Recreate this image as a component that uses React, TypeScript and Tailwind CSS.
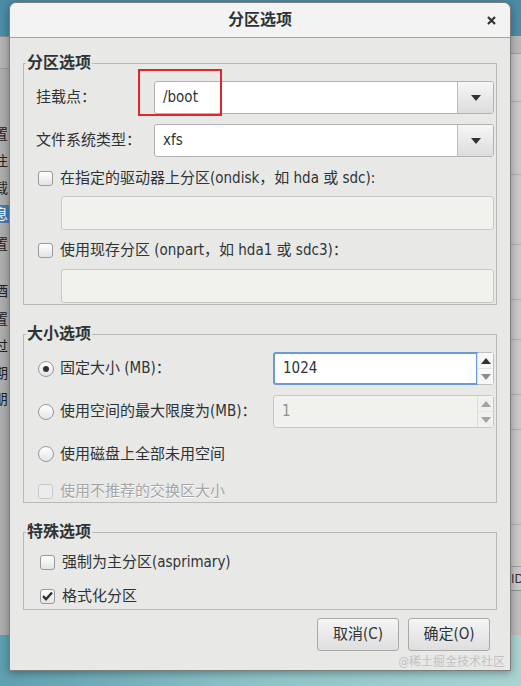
import React from "react";

const leftChars = [
  { y: 133, c: "置" },
  { y: 160, c: "注" },
  { y: 187, c: "载" },
  { y: 213, c: "息", hl: true },
  { y: 243, c: "置" },
  { y: 290, c: "酒" },
  { y: 318, c: "置" },
  { y: 345, c: "过" },
  { y: 372, c: "期" },
  { y: 398, c: "朋" },
];

function Desktop() {
  return (
    <div className="absolute inset-0 flex flex-col">
      <div className="h-[36px] bg-[#4c8ba6]" />
      <div className="flex flex-1">
        <div className="relative w-[12px] overflow-hidden bg-[#aeaeae] border-t border-[#8e8e8e]">
          <div className="h-[32px] border-b border-[#9a9a9a] bg-[#b4b4b4]" />
          {leftChars.map((r) => (
            <div
              key={r.y}
              className={`absolute left-0 w-[12px] h-[18px] overflow-hidden leading-[18px] text-[14px] ${r.hl ? "bg-[#4a7db5] text-white" : "text-[#222]"}`}
              style={{ top: r.y - 36 - 9 }}
            >
              <span className="block w-[20px] -ml-[6px]">{r.c}</span>
            </div>
          ))}
        </div>
        <div className="flex-1" />
        <div className="w-[12px] bg-[#c9c9c9] flex flex-col">
          <div className="h-[18px] border-b border-[#a0a0a0] bg-[#b8b8b8]" />
          <div className="h-[48px] border-b border-[#b0b0b0]" />
          <div className="h-[73px] border-b border-[#b0b0b0]" />
          <div className="h-[70px] border-b border-[#b0b0b0]" />
          <div className="h-[55px] border-b border-[#b0b0b0]" />
          <div className="h-[40px] border-b border-[#b0b0b0]" />
          <div className="h-[55px] border-b border-[#b0b0b0]" />
          <div className="h-[35px] border-b border-[#b0b0b0]" />
          <div className="h-[95px] border-b border-[#b0b0b0]" />
          <div className="h-[42px] border-b border-[#a0a0a0]" />
          <div className="h-[24px] overflow-hidden border-b border-[#909090] text-[13px] leading-[24px] text-[#333] pl-[2px]">ID</div>
          <div className="flex-1 bg-[#bdbdbd]" />
        </div>
      </div>
      <div className="h-[51px] bg-gradient-to-r from-[#5e9fb0] via-[#8fc3c8] to-[#a9d4d2]" />
    </div>
  );
}

function Arrow({ color = "#2e3436", up = false }: { color?: string; up?: boolean }) {
  return (
    <svg width="10" height="6" viewBox="0 0 10 6">
      <path d={up ? "M0 6 L5 0 L10 6 Z" : "M0 0 L10 0 L5 6 Z"} fill={color} />
    </svg>
  );
}

function Combo({ value }: { value: string }) {
  return (
    <div className="flex flex-1 h-[33px] rounded-[3px] border border-[#b2b2b2] bg-white overflow-hidden">
      <div className="flex flex-1 items-center pl-[8px] text-[#2e3436]">{value}</div>
      <div className="flex w-[36px] items-center justify-center border-l border-[#bdbdbd] bg-gradient-to-b from-[#f6f6f6] to-[#dcdcdc]">
        <Arrow />
      </div>
    </div>
  );
}

function Checkbox({ checked = false, disabled = false }: { checked?: boolean; disabled?: boolean }) {
  return (
    <div
      className={`flex h-[15px] w-[15px] shrink-0 items-center justify-center rounded-[3px] border ${
        disabled ? "border-[#c9c9c9] bg-[#ececec]" : "border-[#999] bg-gradient-to-b from-white to-[#e4e4e4]"
      }`}
    >
      {checked && (
        <svg width="11" height="10" viewBox="0 0 11 10">
          <path d="M1 5.2 L4 8.2 L10 1.5" fill="none" stroke="#2e3436" strokeWidth="2.4" />
        </svg>
      )}
    </div>
  );
}

function Radio({ checked = false }: { checked?: boolean }) {
  return (
    <div className="flex h-[16px] w-[16px] shrink-0 items-center justify-center rounded-full border border-[#999] bg-gradient-to-b from-white to-[#e4e4e4]">
      {checked && <div className="h-[6px] w-[6px] rounded-full bg-[#2e3436]" />}
    </div>
  );
}

function Field() {
  return <div className="ml-[25px] h-[34px] rounded-[3px] border border-[#c8c8c5] bg-[#f1f1ee]" />;
}

function Spin({ value, focused = false }: { value: string; focused?: boolean }) {
  return (
    <div className={`flex w-[221px] h-[33px] rounded-[3px] border ${focused ? "border-[#c0c0c0] bg-white" : "border-[#c8c8c5] bg-[#f1f1ee]"}`}>
      <div
        className={`flex flex-1 items-center pl-[8px] ${
          focused ? "-m-[1px] rounded-l-[3px] border-2 border-[#6a9bd6] text-[#2e3436]" : "text-[#8e9192]"
        }`}
      >
        {value}
      </div>
      <div className={`flex w-[16px] flex-col border-l ${focused ? "border-[#e0e0e0] bg-[#f7f7f7]" : "border-[#dcdcd8] bg-[#f1f1ee]"}`}>
        <div className="flex flex-1 items-center justify-center border-b border-[#e4e4e4]">
          <Arrow up color={focused ? "#2e3436" : "#a3a3a3"} />
        </div>
        <div className="flex flex-1 items-center justify-center">
          <Arrow color={focused ? "#8c8c8c" : "#a3a3a3"} />
        </div>
      </div>
    </div>
  );
}

function Section({ title, className, children }: { title: string; className: string; children: React.ReactNode }) {
  return (
    <fieldset className="mt-[18px] first:mt-[14px] border border-[#b8b8b8]">
      <legend className="ml-[2px] px-[1px] text-[16px] leading-[22px] font-bold text-[#2e3436]">{title}</legend>
      <div className={className}>{children}</div>
    </fieldset>
  );
}

function Dialog() {
  return (
    <div className="absolute left-[9px] top-[2px] w-[502px] h-[669px] flex flex-col rounded-t-[7px] border border-[#7d7d7d] bg-[#e8e8e7] shadow-[0_2px_8px_rgba(0,0,0,0.35)]">
      <div className="relative flex h-[35px] shrink-0 items-center justify-center rounded-t-[7px] border-b border-[#a3a3a3] bg-[#f3f3f3]">
        <span className="text-[16px] font-bold text-[#2e3436]">分区选项</span>
        <svg className="absolute right-[14px] top-[13px]" width="9" height="9" viewBox="0 0 9 9">
          <path d="M1 1 L8 8 M8 1 L1 8" stroke="#2e3436" strokeWidth="2.2" />
        </svg>
      </div>

      <div className="relative flex flex-1 flex-col px-[13px]">
        <Section title="分区选项" className="pl-[12px] pr-[2px] pb-[1px]">
          <div className="mt-[7px] flex items-center">
            <div className="w-[118px]">挂载点：</div>
            <Combo value="/boot" />
          </div>
          <div className="mt-[10px] flex items-center">
            <div className="w-[118px]">文件系统类型：</div>
            <Combo value="xfs" />
          </div>
          <div className="mt-[11px] flex h-[20px] items-center gap-[7px] pl-[2px]">
            <Checkbox />
            <span>在指定的驱动器上分区(ondisk，如 hda 或 sdc):</span>
          </div>
          <div className="mt-[8px]">
            <Field />
          </div>
          <div className="mt-[10px] flex h-[20px] items-center gap-[7px] pl-[2px]">
            <Checkbox />
            <span>使用现存分区 (onpart，如 hda1 或 sdc3)：</span>
          </div>
          <div className="mt-[9px]">
            <Field />
          </div>
        </Section>

        <Section title="大小选项" className="pl-[12px] pr-[2px] pb-[1px]">
          <div className="mt-[7px] flex items-center">
            <div className="flex items-center gap-[6px] pl-[2px]">
              <Radio checked />
              <span>固定大小 (MB)：</span>
            </div>
            <div className="ml-auto">
              <Spin value="1024" focused />
            </div>
          </div>
          <div className="mt-[10px] flex items-center">
            <div className="flex items-center gap-[6px] pl-[2px]">
              <Radio />
              <span>使用空间的最大限度为(MB)：</span>
            </div>
            <div className="ml-auto">
              <Spin value="1" />
            </div>
          </div>
          <div className="mt-[16px] flex h-[20px] items-center gap-[6px] pl-[2px]">
            <Radio />
            <span>使用磁盘上全部未用空间</span>
          </div>
          <div className="mt-[17px] flex h-[20px] items-center gap-[7px] pl-[2px]">
            <Checkbox disabled />
            <span className="text-[#a4a4a4] [text-shadow:0_1px_0_#fff]">使用不推荐的交换区大小</span>
          </div>
        </Section>

        <Section title="特殊选项" className="pl-[16px] pr-[2px] pb-[3px]">
          <div className="mt-[9px] flex h-[20px] items-center gap-[7px]">
            <Checkbox />
            <span>强制为主分区(asprimary)</span>
          </div>
          <div className="mt-[14px] flex h-[20px] items-center gap-[7px]">
            <Checkbox checked />
            <span>格式化分区</span>
          </div>
        </Section>

        <div className="mt-[8px] flex justify-end gap-[9px] pr-[7px]">
          <button className="h-[33px] w-[82px] rounded-[3px] border border-[#a9a9a9] bg-gradient-to-b from-[#f5f5f5] to-[#dedede] text-[#2e3436]">
            取消(C)
          </button>
          <button className="h-[33px] w-[82px] rounded-[3px] border border-[#a9a9a9] bg-gradient-to-b from-[#f5f5f5] to-[#dedede] text-[#2e3436]">
            确定(O)
          </button>
        </div>

        <div className="absolute bottom-[1px] right-[5px] text-[12px] leading-[14px] text-[#c2c2c2]">@稀土掘金技术社区</div>
      </div>
    </div>
  );
}

export default function App() {
  return (
    <div className="relative h-[686px] w-[521px] overflow-hidden font-['DejaVu_Sans_Condensed','Liberation_Sans','Noto_Sans_CJK_SC',sans-serif] text-[15px] text-[#2e3436]">
      <Desktop />
      <Dialog />
      <div className="absolute left-[138px] top-[69px] h-[47px] w-[84px] border-2 border-[#e0262b]" />
    </div>
  );
}
